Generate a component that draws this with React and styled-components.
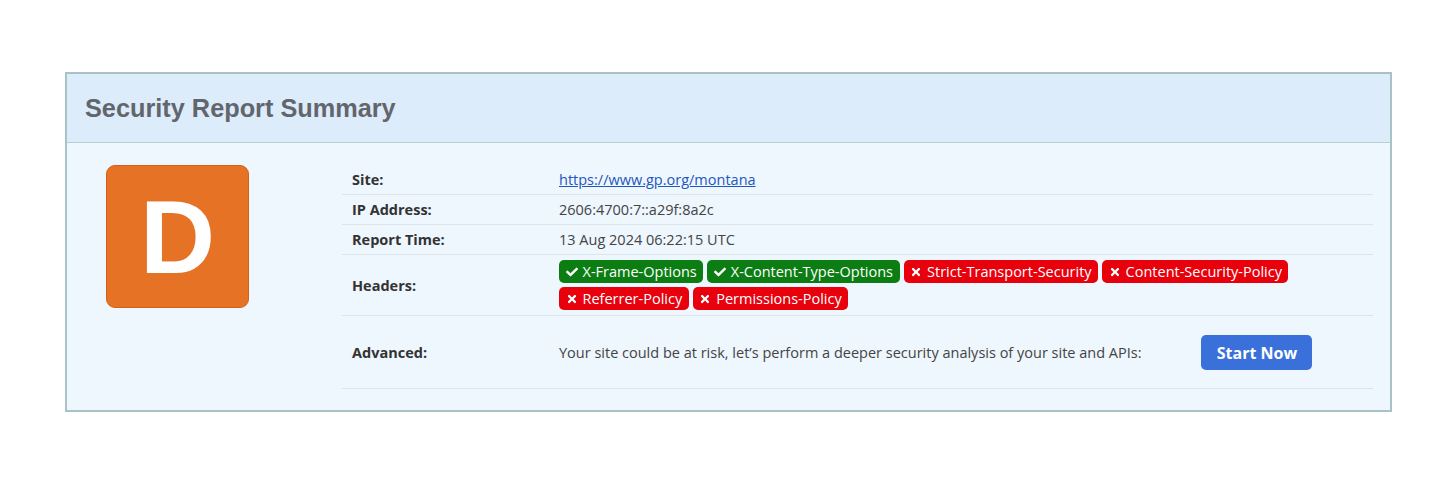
import React from "react";
import styled, { createGlobalStyle } from "styled-components";
import { FaCheck, FaTimes } from "react-icons/fa";

const Global = createGlobalStyle`
  html, body { margin: 0; padding: 0; background: #ffffff; }
  body { font-family: "Open Sans", "Noto Sans", sans-serif; }
`;

const Page = styled.div`
  padding: 72px 64px 0 65px;
`;

const Card = styled.section`
  border: 2px solid #a9c2c5;
  background: #eef6fe;
`;

const Header = styled.header`
  height: 68px;
  display: flex;
  align-items: center;
  padding: 0 18px;
  background: #dcecfb;
  border-bottom: 1px solid #b9cdd3;
`;

const Title = styled.h1`
  margin: 0;
  font-family: "Liberation Sans", Arial, sans-serif;
  font-size: 25.3px;
  font-weight: 700;
  color: #62666c;
`;

const Body = styled.div`
  display: flex;
  align-items: flex-start;
  padding: 22px 17px 21px 39px;
`;

const GradeCol = styled.div`
  width: 236px;
  flex: none;
`;

const Grade = styled.div`
  width: 141px;
  height: 141px;
  box-sizing: content-box;
  border: 1px solid #d4611a;
  border-radius: 9px;
  background: #e57225;
  display: flex;
  align-items: center;
  justify-content: center;
  font-family: "Liberation Sans", Arial, sans-serif;
  font-weight: 700;
  font-size: 104px;
  line-height: 1;
  color: #ffffff;
`;

const Table = styled.div`
  flex: 1;
  display: grid;
  grid-template-columns: 207px 1fr;
`;

const Label = styled.div`
  padding: ${(p) => p.$pad || "5px 10px"};
  font-size: 14.5px;
  font-weight: 700;
  line-height: 19px;
  color: #333333;
  border-bottom: 1px solid #dde3e8;
  display: flex;
  align-items: center;
`;

const Value = styled.div`
  padding: ${(p) => p.$pad || "5px 10px"};
  font-size: 14.5px;
  line-height: 19px;
  color: #444444;
  border-bottom: 1px solid #dde3e8;
  display: flex;
  align-items: center;
`;

const Link = styled.a`
  color: #1f56c0;
  text-decoration: underline;
`;

const Badges = styled.div`
  display: flex;
  flex-wrap: wrap;
  gap: 4px 4px;
`;

const Badge = styled.span`
  display: inline-flex;
  align-items: center;
  gap: 5px;
  height: 23px;
  padding: 0 6.5px;
  border-radius: 5px;
  font-size: 14.5px;
  color: #ffffff;
  background: ${(p) => (p.$ok ? "#0b7d12" : "#e8000c")};
  svg { width: 12px; height: 12px; }
`;

const Advanced = styled.div`
  display: flex;
  align-items: center;
  gap: 60px;
`;

const Button = styled.button`
  height: 35px;
  width: 111px;
  border: none;
  border-radius: 5px;
  background: #3a70d9;
  color: #ffffff;
  font-family: "Open Sans", sans-serif;
  font-weight: 700;
  font-size: 16px;
  cursor: pointer;
`;

const headers = [
  ["X-Frame-Options", true],
  ["X-Content-Type-Options", true],
  ["Strict-Transport-Security", false],
  ["Content-Security-Policy", false],
  ["Referrer-Policy", false],
  ["Permissions-Policy", false],
];

export default function App() {
  return (
    <Page>
      <Global />
      <Card>
        <Header>
          <Title>Security Report Summary</Title>
        </Header>
        <Body>
          <GradeCol>
            <Grade>D</Grade>
          </GradeCol>
          <Table>
            <Label>Site:</Label>
            <Value>
              <Link href="#">https://www.gp.org/montana</Link>
            </Value>
            <Label>IP Address:</Label>
            <Value>2606:4700:7::a29f:8a2c</Value>
            <Label>Report Time:</Label>
            <Value>13 Aug 2024 06:22:15 UTC</Value>
            <Label>Headers:</Label>
            <Value>
              <Badges>
                {headers.map(([name, ok]) => (
                  <Badge key={name} $ok={ok}>
                    {ok ? <FaCheck /> : <FaTimes />}
                    {name}
                  </Badge>
                ))}
              </Badges>
            </Value>
            <Label $pad="19px 10px 18px">Advanced:</Label>
            <Value $pad="19px 10px 18px">
              <Advanced>
                <span>
                  Your site could be at risk, let’s perform a deeper security
                  analysis of your site and APIs:
                </span>
                <Button>Start Now</Button>
              </Advanced>
            </Value>
          </Table>
        </Body>
      </Card>
    </Page>
  );
}
